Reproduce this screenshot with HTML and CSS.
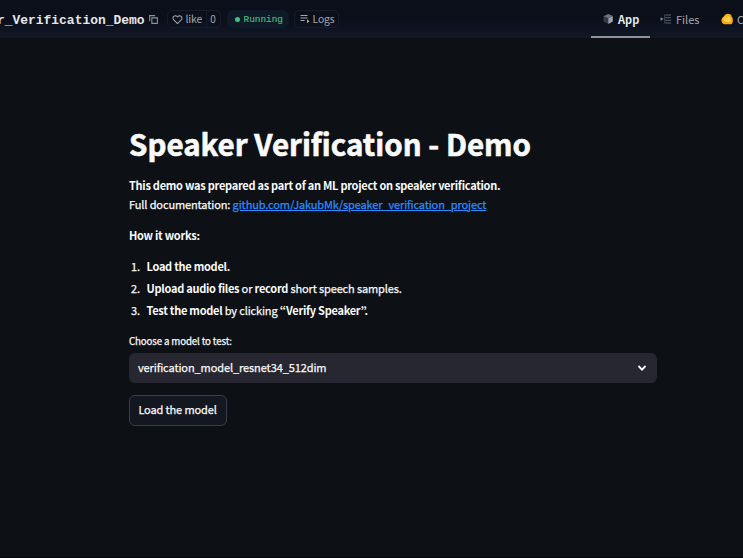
FILE: index.html
```html
<!DOCTYPE html>
<html lang="en">
<head>
<meta charset="utf-8">
<title>Speaker Verification - Demo</title>
<link rel="stylesheet" href="styles.css">
</head>
<body>
<header class="topbar">
  <div class="space">
    <span class="space-name">r_Verification_Demo</span>
    <svg class="copy" viewBox="0 0 10 10" fill="none" stroke="currentColor"><path d="M3.5 3.5h5v5h-5zM1.5 6.5v-5h5"/></svg>
    <div class="like">
      <span class="like-main"><svg class="heart" viewBox="0 0 12 12" fill="none" stroke="currentColor" stroke-width="1.1"><path d="M6 10.4 1.7 6.1C-.4 3.7 3.2.1 6 3.1 8.8.1 12.4 3.7 10.3 6.1Z"/></svg>like</span>
      <span class="like-count">0</span>
    </div>
    <div class="status"><i class="dot"></i>Running</div>
    <div class="logs"><svg class="lines" viewBox="0 0 10 10" stroke="currentColor" fill="none"><path d="M.5 1.5h7M.5 4h7M.5 6.5h4"/><path d="M5.4 7.2h2.4M7 5.2 9.5 7.2 7 9.2z" fill="currentColor" stroke="none"/></svg>Logs</div>
  </div>
  <nav class="tabs">
    <a class="tab active"><svg class="tab-icon" viewBox="0 0 12 12"><path fill="#343a42" d="m1.5 3.2 4.8 2V11L1.5 8.6z"/><path fill="#9ca3af" d="m6.3 5.2 4.5-2.2v5.4L6.3 11z"/><path fill="#6b7280" d="m1.5 3.2 4.8-2.1L10.8 3 6.3 5.2z"/></svg>App</a>
    <a class="tab"><svg class="tab-icon" viewBox="0 0 12 12" fill="none" stroke="#5b6370"><path d="M5.5 2h5.5M5.5 4.7h5.5M5.5 7.3h5.5M5.5 10h5.5"/><path d="M4.8 1.5v9" stroke-width=".8"/><path d="M.6 4.2 3.5 6 .6 7.8z" fill="#8c94a1" stroke="none"/></svg>Files</a>
    <a class="tab"><svg class="tab-icon" viewBox="0 0 12 12"><path fill="#f7a823" d="M.6 8.6C0 6.3 1.4 4 3.2 3.2 4.2 1.2 6 .4 7.4 1c2-.4 3.2.6 3.2 2.4 1.8 1.6 1.7 6.3-.2 7.8H3.2C1.9 11.2.9 10 .6 8.6z"/><path fill="#ffd13d" d="M2 6.2C3 3.3 5.3 2.3 7.2 3c2.2.8 3.2 4 1.8 6H4z"/><path d="m3 4.3 1.5 1.5M5.2 2.9l1.1 1.9M1.5 8.5l2 1" stroke="#e78b16" stroke-width=".7"/></svg>Community</a>
  </nav>
</header>
<main class="app">
  <h1>Speaker Verification - Demo</h1>
  <p class="intro"><b>This demo was prepared as part of an ML project on speaker verification.</b><br><span class="doc">Full documentation: <a class="link">github.com/JakubMk/speaker_verification_project</a></span></p>
  <p class="how"><b>How it works:</b></p>
  <ol class="steps">
    <li><span class="num">1.</span><span><b>Load the model.</b></span></li>
    <li><span class="num">2.</span><span><b>Upload audio files</b> or <b>record</b> short speech samples.</span></li>
    <li><span class="num">3.</span><span><b>Test the model</b> by clicking <b>“Verify Speaker”.</b></span></li>
  </ol>
  <div class="label">Choose a model to test:</div>
  <div class="select"><span class="value">verification_model_resnet34_512dim</span><svg class="chevron" viewBox="0 0 10 8" fill="none" stroke="#fafafa" stroke-width="1.8"><path d="m1.5 2 3.5 3.6L8.5 2"/></svg></div>
  <button class="load">Load the model</button>
</main>
</body>
</html>
```
FILE: styles.css
```css
* { box-sizing: border-box; }
body {
  margin: 0;
  height: 558px;
  overflow: hidden;
  background: #0d1116;
  border-bottom: 1px solid #08090d;
  color: #fafafa;
  font-family: "Noto Sans CJK JP", "Open Sans", sans-serif;
  font-size: 11px;
  letter-spacing: -.12px;
  -webkit-text-stroke: .25px;
}
b { letter-spacing: -.27px; -webkit-text-stroke: 0; }
.topbar {
  height: 38px;
  display: flex;
  justify-content: space-between;
  overflow: hidden;
  background: linear-gradient(#0b0f19, #0b0f19 50%, #101827);
  color: #a3a8b2;
  -webkit-text-stroke: 0;
}
.space { display: flex; align-items: center; height: 38px; margin-left: -3px; }
.space-name {
  padding-top: 2px;
  font: bold 12.95px "Liberation Mono", monospace;
  letter-spacing: 0;
  color: #e5e7eb;
}
.copy { width: 11px; height: 11px; margin-left: 3px; color: #8b919c; }
.like, .logs {
  display: flex;
  align-items: center;
  height: 18px;
  border: 1px solid #171c28;
  border-radius: 5px;
  font-size: 10.4px;
  line-height: 14px;
}
.like { margin-left: 8px; width: 54px; }
.like-main { display: flex; align-items: center; width: 39px; height: 16px; padding: 0 0 1px 4px; gap: 3px; border-right: 1px solid #171c28; }
.heart { width: 11px; height: 11px; margin-top: 1px; }
.like-count { flex: 1; text-align: center; font-size: 10px; padding-bottom: 1px; }
.status {
  display: flex;
  align-items: center;
  width: 62px;
  height: 18px;
  margin-left: 6px;
  padding-left: 8px;
  gap: 4px;
  border-radius: 6px;
  background: #0e1a27;
  color: #48b779;
  font: 9.4px "Liberation Mono", monospace;
  letter-spacing: 0;
  -webkit-text-stroke: .2px;
}
.dot { width: 5px; height: 5px; border-radius: 50%; background: #45c07c; }
.logs { margin-left: 5px; width: 45px; padding: 0 0 1px 5px; gap: 3px; }
.lines { width: 10px; height: 10px; }
.tabs { display: flex; width: 152px; flex: none; letter-spacing: 0; }
.tab {
  display: flex;
  align-items: center;
  flex: none;
  height: 38px;
  padding: 2px 11px 0;
  gap: 4px;
  border-bottom: 2px solid transparent;
  white-space: nowrap;
}
.tab.active { width: 59px; color: #e5e7eb; font-weight: bold; border-color: #90949b; }
.tab:nth-child(2) { width: 60px; padding-left: 10px; }
.tab-icon { width: 12px; height: 12px; flex: none; }
.app { width: 528px; margin: 83px 0 0 129px; }
h1 {
  margin: 0;
  height: 44px;
  line-height: 44px;
  font-size: 29.5px;
  font-weight: bold;
  letter-spacing: 0;
  white-space: nowrap;
  -webkit-text-stroke: .6px;
}
p { margin: 0; line-height: 19px; white-space: nowrap; }
.intro { margin-top: 11px; }
.link { color: #2d8cff; text-decoration: underline; }
.how { margin-top: 12px; }
.steps { list-style: none; margin: 10px 0 0; padding: 0; }
.steps li { display: flex; height: 22px; line-height: 22px; white-space: pre; letter-spacing: -.14px; }
.num { width: 17.5px; padding-left: 2px; }
.label { margin-top: 11px; height: 18px; line-height: 18px; font-size: 9.7px; letter-spacing: -.13px; }
.select {
  display: flex;
  align-items: center;
  justify-content: space-between;
  height: 30px;
  margin-top: 3px;
  padding: 0 10px 0 9px;
  border-radius: 6px;
  background: #262730;
}
.value { padding-bottom: 2px; letter-spacing: -.1px; }
.chevron { width: 10px; height: 8px; }
.load {
  display: block;
  width: 98px;
  height: 31px;
  margin-top: 12px;
  padding: 0 1px 3px 0;
  border: 1px solid #3b3d46;
  border-radius: 6px;
  background: #131720;
  color: #fafafa;
  font: inherit;
  letter-spacing: -.13px;
}
```
